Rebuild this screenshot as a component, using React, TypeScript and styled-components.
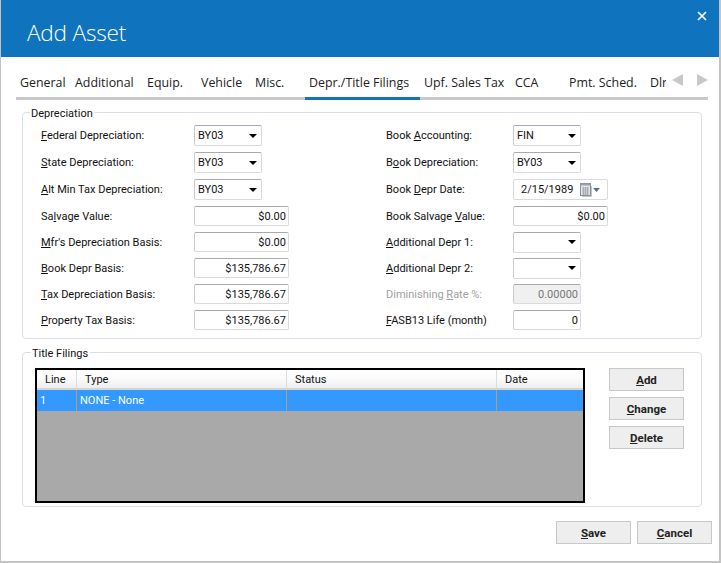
import styled, { createGlobalStyle } from 'styled-components';

const tabs = [
  { label: 'General', width: 55 },
  { label: 'Additional', width: 72 },
  { label: 'Equip.', width: 54 },
  { label: 'Vehicle', width: 54 },
  { label: 'Misc.', width: 54 },
  { label: 'Depr./Title Filings', width: 115, active: true },
  { label: 'Upf. Sales Tax', width: 91 },
  { label: 'CCA', width: 54 },
  { label: 'Pmt. Sched.', width: 81 },
  { label: 'Dlr', width: 20 },
];

export default function App() {
  return (
    <>
      <GlobalStyle />
      <S.Window>
        <S.Header>
          <S.Title>Add Asset</S.Title>
          <S.Close aria-label="Close">
            <svg width="10" height="10" viewBox="0 0 10 10">
              <path d="M1 1 L9 9 M9 1 L1 9" stroke="#fff" strokeWidth="1.7" />
            </svg>
          </S.Close>
        </S.Header>

        <S.Body>
          <S.TabBar>
            {tabs.map((tab) => (
              <S.Tab key={tab.label} $width={tab.width} $active={tab.active}>
                {tab.label}
              </S.Tab>
            ))}
            <S.TabArrows>
              <svg width="11" height="12" viewBox="0 0 11 12">
                <path d="M11 0 V12 L0 6 Z" fill="#c8c8c8" />
              </svg>
              <svg width="11" height="12" viewBox="0 0 11 12">
                <path d="M0 0 V12 L11 6 Z" fill="#c8c8c8" />
              </svg>
            </S.TabArrows>
          </S.TabBar>

          <S.DeprGroup>
            <S.Legend $offset={-11}>Depreciation</S.Legend>
            <S.FieldGrid>
              <S.FieldRow>
                <S.Label><u>F</u>ederal Depreciation:</S.Label>
                <Select value="BY03" />
              </S.FieldRow>
              <S.FieldRow $right>
                <S.Label>Book <u>A</u>ccounting:</S.Label>
                <Select value="FIN" />
              </S.FieldRow>

              <S.FieldRow>
                <S.Label><u>S</u>tate Depreciation:</S.Label>
                <Select value="BY03" />
              </S.FieldRow>
              <S.FieldRow $right>
                <S.Label>B<u>o</u>ok Depreciation:</S.Label>
                <Select value="BY03" />
              </S.FieldRow>

              <S.FieldRow>
                <S.Label><u>A</u>lt Min Tax Depreciation:</S.Label>
                <Select value="BY03" />
              </S.FieldRow>
              <S.FieldRow $right>
                <S.Label>Book <u>D</u>epr Date:</S.Label>
                <S.DateBox>
                  <S.DateText>2/15/1989</S.DateText>
                  <svg width="13" height="14" viewBox="0 0 13 14">
                    <rect x="1.5" y="0.5" width="10" height="12" fill="#e4e6ea" stroke="#8a8f96" />
                    <rect x="1.5" y="0.5" width="10" height="2" fill="#9aa0a8" />
                    <path d="M3 5 H10 M3 7 H10 M3 9 H10 M3 11 H10 M4.5 4 V12 M6.5 4 V12 M8.5 4 V12" stroke="#a8adb4" strokeWidth="1" />
                    <path d="M12.5 3 V13.5 H3" stroke="#c4c4c4" fill="none" />
                  </svg>
                  <svg width="7" height="4" viewBox="0 0 7 4">
                    <path d="M0 0 H7 L3.5 4 Z" fill="#5f6f8a" />
                  </svg>
                </S.DateBox>
              </S.FieldRow>

              <S.FieldRow>
                <S.Label>Sa<u>l</u>vage Value:</S.Label>
                <S.Amount>$0.00</S.Amount>
              </S.FieldRow>
              <S.FieldRow $right>
                <S.Label>Book Salvage <u>V</u>alue:</S.Label>
                <S.Amount>$0.00</S.Amount>
              </S.FieldRow>

              <S.FieldRow>
                <S.Label><u>M</u>fr's Depreciation Basis:</S.Label>
                <S.Amount>$0.00</S.Amount>
              </S.FieldRow>
              <S.FieldRow $right>
                <S.Label><u>A</u>dditional Depr 1:</S.Label>
                <Select value="" />
              </S.FieldRow>

              <S.FieldRow>
                <S.Label><u>B</u>ook Depr Basis:</S.Label>
                <S.Amount>$135,786.67</S.Amount>
              </S.FieldRow>
              <S.FieldRow $right>
                <S.Label><u>A</u>dditional Depr 2:</S.Label>
                <Select value="" />
              </S.FieldRow>

              <S.FieldRow>
                <S.Label><u>T</u>ax Depreciation Basis:</S.Label>
                <S.Amount>$135,786.67</S.Amount>
              </S.FieldRow>
              <S.FieldRow $right>
                <S.Label $disabled>Diminishing <u>R</u>ate %:</S.Label>
                <S.Amount $short $disabled>0.00000</S.Amount>
              </S.FieldRow>

              <S.FieldRow>
                <S.Label><u>P</u>roperty Tax Basis:</S.Label>
                <S.Amount>$135,786.67</S.Amount>
              </S.FieldRow>
              <S.FieldRow $right>
                <S.Label><u>F</u>ASB13 Life (month)</S.Label>
                <S.Amount $short>0</S.Amount>
              </S.FieldRow>
            </S.FieldGrid>
          </S.DeprGroup>

          <S.TitleGroup>
            <S.Legend $offset={-4}>Title Filings</S.Legend>
            <S.TitleContent>
              <S.Table>
                <S.HeaderRow>
                  <S.HeaderCell>Line</S.HeaderCell>
                  <S.HeaderCell>Type</S.HeaderCell>
                  <S.HeaderCell>Status</S.HeaderCell>
                  <S.HeaderCell>Date</S.HeaderCell>
                </S.HeaderRow>
                <S.SelectedRow>
                  <S.Cell>1</S.Cell>
                  <S.Cell>NONE - None</S.Cell>
                  <S.Cell />
                  <S.Cell />
                </S.SelectedRow>
              </S.Table>
              <S.SideButtons>
                <S.Button><u>A</u>dd</S.Button>
                <S.Button><u>C</u>hange</S.Button>
                <S.Button><u>D</u>elete</S.Button>
              </S.SideButtons>
            </S.TitleContent>
          </S.TitleGroup>

          <S.Footer>
            <S.Button><u>S</u>ave</S.Button>
            <S.Button><u>C</u>ancel</S.Button>
          </S.Footer>
        </S.Body>
      </S.Window>
    </>
  );
}

function Select({ value }: { value: string }) {
  return (
    <S.SelectBox>
      <span>{value}</span>
      <svg width="8" height="4" viewBox="0 0 8 4">
        <path d="M0 0 H8 L4 4 Z" fill="#000" />
      </svg>
    </S.SelectBox>
  );
}

const GlobalStyle = createGlobalStyle`
  html, body {
    margin: 0;
    padding: 0;
    background: #fff;
  }
  * {
    box-sizing: border-box;
  }
`;

const FONT = 'Roboto, "Open Sans", "Liberation Sans", sans-serif';
const TITLE_FONT = '"Open Sans", "Noto Sans", "Liberation Sans", sans-serif';

const S = {
  Window: styled.div`
    width: 721px;
    height: 563px;
    display: flex;
    flex-direction: column;
    overflow: hidden;
    background: #fff;
    font-family: ${FONT};
    font-size: 11px;
    color: #111;
    border-left: 1px solid #c4c4c4;
    border-right: 2px solid #c4c4c4;
    border-bottom: 2px solid #c4c4c4;
  `,

  Header: styled.div`
    height: 57px;
    margin: 0 -2px 0 -1px;
    flex-shrink: 0;
    display: flex;
    justify-content: space-between;
    background: #0f74bd;
    color: #fff;
  `,

  Title: styled.div`
    padding: 17px 0 0 27px;
    font-family: ${TITLE_FONT};
    font-size: 22.6px;
    line-height: 32px;
    font-weight: 300;
    letter-spacing: -0.2px;
  `,

  Close: styled.div`
    padding: 11px 14px 0 0;
  `,

  Body: styled.div`
    flex: 1;
    display: flex;
    flex-direction: column;
    padding: 0 0 0 15px;
  `,

  TabBar: styled.div`
    width: 692px;
    height: 43px;
    margin-bottom: 5px;
    display: flex;
    align-items: stretch;
    position: relative;
    border-bottom: 3px solid #c8c8c8;
  `,

  Tab: styled.div<{ $width: number; $active?: boolean }>`
    width: ${(p) => p.$width}px;
    padding: 17px 0 0 4px;
    margin-bottom: -3px;
    font-family: ${TITLE_FONT};
    font-size: 12.4px;
    line-height: 17px;
    white-space: nowrap;
    overflow: hidden;
    color: #222;
    border-bottom: 3px solid ${(p) => (p.$active ? '#0f74bd' : 'transparent')};
  `,

  TabArrows: styled.div`
    position: absolute;
    top: 17px;
    right: 0;
    display: flex;
    gap: 14px;
  `,

  DeprGroup: styled.fieldset`
    width: 680px;
    height: 234px;
    margin: 0 0 6px 6px;
    padding: 3px 0 0 18px;
    border: 1px solid #d8dfe8;
    border-radius: 4px;
    min-width: 0;
  `,

  TitleGroup: styled.fieldset`
    width: 680px;
    height: 162px;
    margin: 0 0 14px 6px;
    padding: 9px 0 0 12px;
    border: 1px solid #d8dfe8;
    border-radius: 4px;
    min-width: 0;
  `,

  Legend: styled.legend<{ $offset: number }>`
    position: relative;
    top: 2px;
    margin-left: ${(p) => p.$offset}px;
    padding: 0 2px 0 1px;
    line-height: 14px;
    color: #111;
  `,

  FieldGrid: styled.div`
    display: grid;
    grid-template-columns: 345px 1fr;
    grid-template-rows: repeat(3, 27px) repeat(5, 26px);
  `,

  FieldRow: styled.div<{ $right?: boolean }>`
    display: grid;
    grid-template-columns: ${(p) => (p.$right ? 127 : 153)}px 1fr;
    align-items: center;
  `,

  Label: styled.div<{ $disabled?: boolean }>`
    white-space: nowrap;
    color: ${(p) => (p.$disabled ? '#a0a0a0' : '#111')};
  `,

  SelectBox: styled.div`
    width: 68px;
    height: 21px;
    padding: 0 4px 0 3px;
    display: flex;
    align-items: center;
    justify-content: space-between;
    background: #fff;
    border: 1px solid #d9d9de;
    border-top-color: #a9a9b2;
    border-left-color: #c9c9ce;
    border-radius: 2px;
  `,

  DateBox: styled.div`
    width: 95px;
    height: 21px;
    padding: 0 7px 0 7px;
    display: flex;
    align-items: center;
    gap: 1px;
    border: 1px solid #d9d9de;
    border-radius: 2px;
  `,

  DateText: styled.span`
    flex: 1;
  `,

  Amount: styled.div<{ $short?: boolean; $disabled?: boolean }>`
    width: ${(p) => (p.$short ? 68 : 95)}px;
    height: 20px;
    padding: 0 2px;
    display: flex;
    align-items: center;
    justify-content: flex-end;
    background: ${(p) => (p.$disabled ? '#f0f0f0' : '#fff')};
    color: ${(p) => (p.$disabled ? '#777' : '#111')};
    border: 1px solid #d9d9de;
    border-top-color: #a9a9b2;
    border-left-color: #c9c9ce;
    border-radius: 2px;
  `,

  TitleContent: styled.div`
    display: flex;
    align-items: flex-start;
    gap: 24px;
  `,

  Table: styled.div`
    width: 550px;
    height: 135px;
    background: #a9a9a9;
    border: 2px solid #000;
  `,

  HeaderRow: styled.div`
    height: 20px;
    display: grid;
    grid-template-columns: 40px 210px 210px 1fr;
    background: linear-gradient(#fff 0%, #fafafa 50%, #eceef0 100%);
    border-bottom: 2px solid #d4d4d4;
  `,

  HeaderCell: styled.div`
    padding: 2px 0 0 8px;
    line-height: 15px;
    border-right: 1px solid #dcdcdc;

    &:last-child {
      border-right: none;
    }
  `,

  SelectedRow: styled.div`
    height: 21px;
    display: grid;
    grid-template-columns: 40px 210px 210px 1fr;
    background: #3399ff;
    color: #fff;
  `,

  Cell: styled.div`
    padding: 3px 0 0 3px;
    line-height: 15px;
    border-right: 1px solid #b99a78;

    &:last-child {
      border-right: none;
    }
  `,

  SideButtons: styled.div`
    display: flex;
    flex-direction: column;
    gap: 6px;
  `,

  Button: styled.div`
    width: 75px;
    height: 23px;
    display: flex;
    align-items: center;
    justify-content: center;
    background: #eeeeee;
    border: 1px solid #c8c8c8;
    font-size: 11.5px;
    font-weight: 700;
    color: #222;
  `,

  Footer: styled.div`
    width: 696px;
    display: flex;
    justify-content: flex-end;
    gap: 6px;
  `,
};
